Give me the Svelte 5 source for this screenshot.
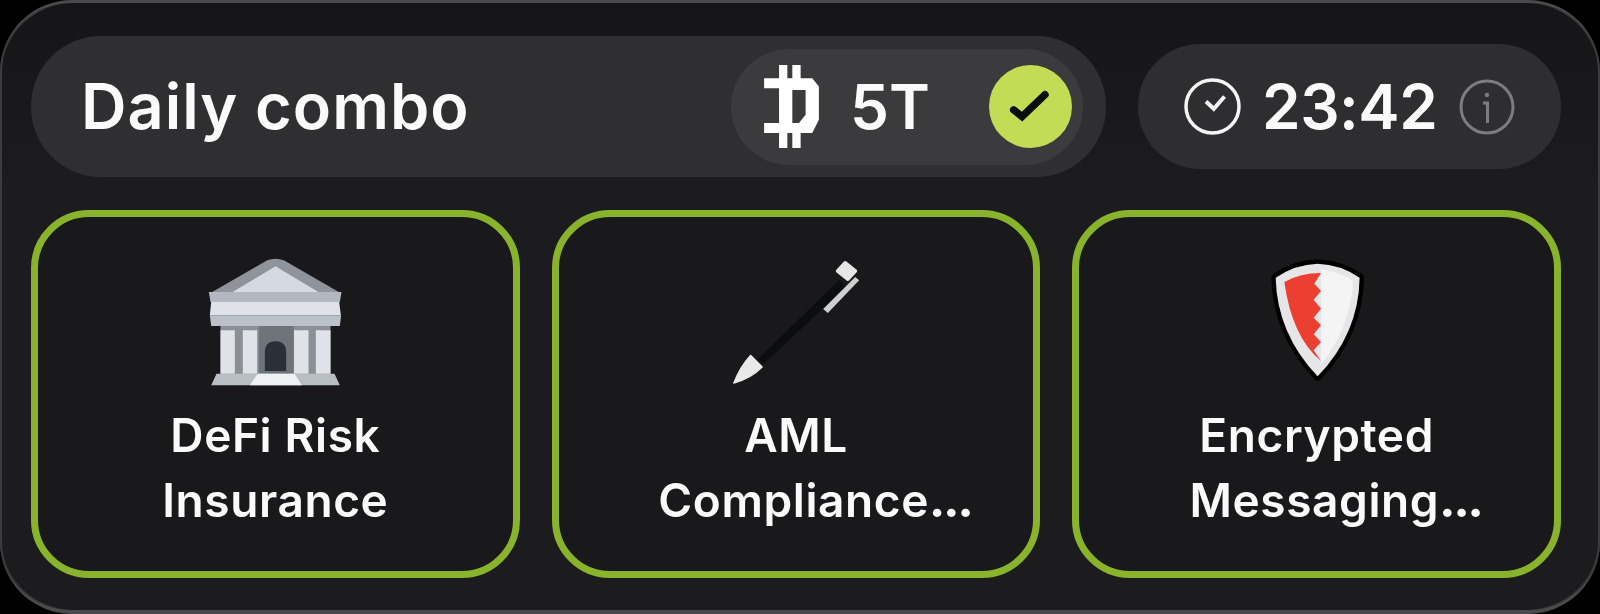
<script>
    const cards = [
        {id: 'bank', lines: ['DeFi Risk', 'Insurance']},
        {id: 'pen', lines: ['AML', 'Compliance'], cut: true},
        {id: 'shield', lines: ['Encrypted', 'Messaging'], cut: true}
    ];
</script>

<div class="panel">
    <header class="top">
        <div class="combo">
            <span class="title">Daily combo</span>
            <div class="reward">
                <svg class="coin" viewBox="40 30 165 250" aria-hidden="true">
                    <path fill="#fff" fill-rule="evenodd" d="M85 30H110V70H125V30H150V70H185L205 95V195L185 235H150V280H125V235H110V280H85V235H40V205H85V100H40V70H85ZM125 105V205H145L165 180V105Z"/>
                </svg>
                <span class="amount">5T</span>
                <svg class="done" viewBox="0 0 246 246" aria-hidden="true">
                    <circle cx="123" cy="123" r="123" fill="#c3dc55"/>
                    <path d="M73 133L98 153L166 88" fill="none" stroke="#0d0d0d" stroke-width="22" stroke-linecap="round"/>
                </svg>
            </div>
        </div>
        <div class="timer">
            <svg class="clock" viewBox="0 0 57 57" aria-hidden="true">
                <circle cx="28.500" cy="28.500" r="26.500" fill="none" stroke="#f4f4f4" stroke-width="3.500"/>
                <path d="M22 23.500L29.800 30.800L40.500 18.500" fill="none" stroke="#f4f4f4" stroke-width="4"/>
            </svg>
            <span class="time">23:42</span>
            <svg class="info" viewBox="0 0 56 56" aria-hidden="true">
                <circle cx="28" cy="28" r="26" fill="none" stroke="#7d7d7f" stroke-width="3"/>
                <circle cx="28" cy="16" r="2.200" fill="#7d7d7f"/>
                <path d="M24 24h4.500v20" fill="none" stroke="#7d7d7f" stroke-width="3"/>
            </svg>
        </div>
    </header>

    <section class="cards">
        {#each cards as card}
            <article class="card">
                <div class="pic">
                    {#if card.id === 'bank'}
                        <svg class="bank" viewBox="110 50 410 390" aria-hidden="true">
                            <path fill="#8f949b" d="M290 60q25-10 50 0l165 95H125z"/>
                            <path fill="#d5d9e1" d="M315 78l130 78H185z"/>
                            <path fill="#b3b8c0" d="M115 155h398l-5 30H120z"/>
                            <path fill="#dfe2e9" d="M122 185h384l5 40H118z"/>
                            <path fill="#bcc1c9" d="M118 225h394l-4 32H122z"/>
                            <path fill="#8b9097" d="M150 257h330v145H150z"/>
                            <path fill="#dfe2e9" d="M150 270h43v130h-43zM217 270h43v130h-43zM370 270h44v130h-44zM436 270h44v130h-44z"/>
                            <path fill="#6f747b" d="M265 257h105v143H265z"/>
                            <path fill="#2b3038" d="M283 392v-55q0-34 32-34t32 34v55z"/>
                            <path fill="#b9bdc4" d="M138 400h354l16 35H122z"/>
                            <path fill="#f0f1f4" d="M262 400h110l22 35H238z"/>
                        </svg>
                    {:else if card.id === 'pen'}
                        <svg class="pen" viewBox="80 50 410 390" aria-hidden="true">
                            <path fill="#0a0e11" d="M188 372l-16-16 245-238 20 22z"/>
                            <path fill="#e9e9e9" stroke="#e9e9e9" stroke-width="4" stroke-linejoin="round" d="M100 428Q118 380 150 345L185 380Q150 415 100 428Z"/>
                            <path fill="#e6e6e6" stroke="#e6e6e6" stroke-width="12" stroke-linejoin="round" d="M412 92L434 68L464 92L442 116Z"/>
                            <path fill="#cfcfcf" d="M368 206l96-96 12 10-94 98z"/>
                        </svg>
                    {:else}
                        <svg class="shield" viewBox="110 50 300 390" aria-hidden="true">
                            <path fill="#000" stroke="#000" stroke-width="26" stroke-linejoin="round" d="M262 70Q330 72 388 112Q385 280 262 408Q140 280 136 112Q195 72 262 70Z"/>
                            <path fill="#e6e6e8" d="M262 70Q330 72 388 112Q385 280 262 408Q140 280 136 112Q195 72 262 70Z"/>
                            <path fill="#f4f4f5" d="M272 88Q325 92 368 122Q362 260 272 372Z"/>
                            <path fill="#ea3f31" d="M272 98L252 130L272 152L250 178L272 205L250 232L272 255L250 282L272 305L250 330L272 362Q185 290 162 125Q210 98 272 98Z"/>
                        </svg>
                    {/if}
                </div>
                <h3>{card.lines[0]}<br />{card.lines[1]}{#if card.cut}<span class="dots">...</span>{/if}</h3>
            </article>
        {/each}
    </section>
</div>

<style>
    :global(body) {
        margin: 0;
        background: #000;
    }
    .panel {
        box-sizing: border-box;
        width: 1600px;
        height: 614px;
        padding: 33px 39px 32px 31px;
        border: solid #4a4a4c;
        border-width: 3px 0 4px;
        border-radius: 72px;
        background: linear-gradient(#151517 0, #1c1c1f 30%);
        box-shadow: inset 2px 0 0 #3c3c3e, inset -2px 0 0 #3c3c3e;
        font-family: Inter, "Liberation Sans", sans-serif;
        color: #fafafa;
        filter: blur(0.7px);
    }
    .top {
        display: flex;
        align-items: center;
        gap: 32px;
        height: 141px;
    }
    .combo {
        flex: 1;
        display: flex;
        align-items: center;
        justify-content: space-between;
        height: 141px;
        padding: 0 23px 0 50px;
        border-radius: 70px;
        background: #2f2f32;
    }
    .title {
        margin-top: -2px;
        font-size: 63px;
        font-weight: 600;
        letter-spacing: 1px;
    }
    .reward {
        display: flex;
        align-items: center;
        box-sizing: border-box;
        width: 352px;
        height: 116px;
        padding: 0 11px 0 33px;
        border-radius: 58px;
        background: #3b3b3e;
    }
    .coin {
        width: 55px;
        height: 83px;
    }
    .amount {
        margin-left: 31px;
        font-size: 62px;
        font-weight: 600;
    }
    .done {
        width: 83px;
        height: 83px;
        margin-left: auto;
    }
    .timer {
        display: flex;
        align-items: center;
        box-sizing: border-box;
        width: 423px;
        height: 125px;
        padding: 0 46px;
        border-radius: 62px;
        background: #2e2e31;
    }
    .clock {
        width: 57px;
        height: 57px;
    }
    .time {
        margin-left: 21px;
        font-size: 62px;
        font-weight: 600;
        letter-spacing: -0.5px;
    }
    .info {
        width: 56px;
        height: 56px;
        margin-left: auto;
    }
    .cards {
        display: grid;
        grid-template-columns: repeat(3, 1fr);
        gap: 32px;
        margin-top: 33px;
    }
    .card {
        box-sizing: border-box;
        height: 368px;
        padding-top: 40px;
        border: 7px solid #8ab32c;
        border-radius: 58px;
        background: #19191c;
        text-align: center;
    }
    .pic {
        display: flex;
        justify-content: center;
        height: 130px;
    }
    .bank {
        width: 137px;
        height: 130px;
    }
    .pen {
        width: 137px;
        height: 130px;
    }
    .shield {
        width: 100px;
        height: 130px;
        overflow: visible;
    }
    h3 {
        margin: 16px 0 0;
        font-size: 46px;
        font-weight: 600;
        line-height: 65px;
        letter-spacing: 0.600px;
    }
    .dots {
        margin-right: -38px;
        letter-spacing: -2px;
        font-weight: 800;
    }
</style>
